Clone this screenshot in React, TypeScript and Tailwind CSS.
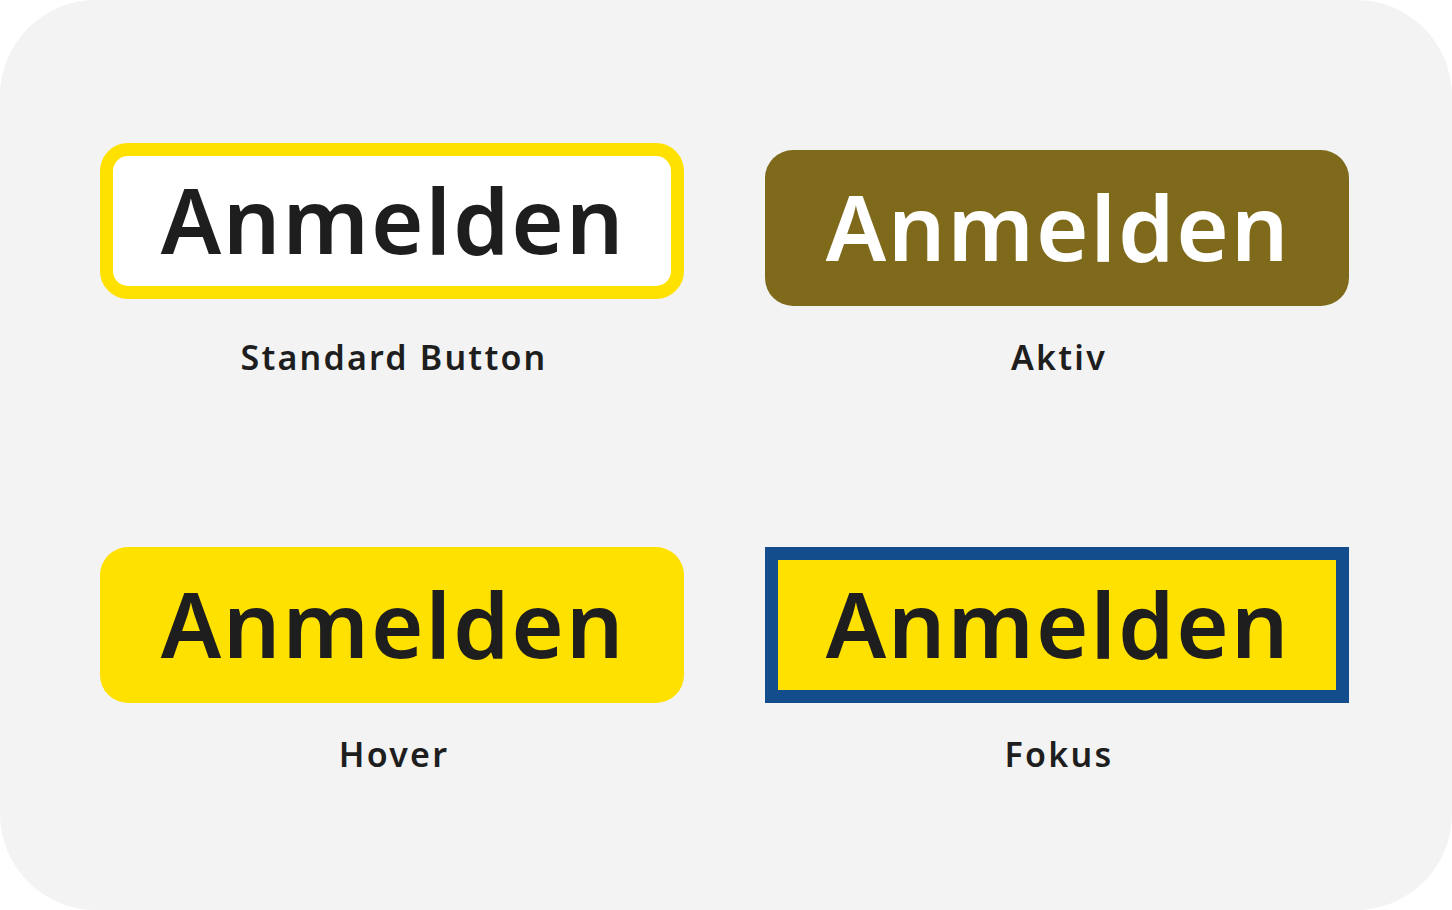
import type { ReactNode } from "react";

type Variant = "standard" | "active" | "hover" | "focus";

const buttonStyles: Record<Variant, string> = {
	standard: "rounded-[28px] border-[13px] border-[#ffe100] bg-white text-[#1e1e1e]",
	active: "translate-y-[7px] rounded-[28px] bg-[#7f6a1c] text-white",
	hover: "rounded-[28px] bg-[#ffe100] text-[#1e1e1e]",
	focus: "border-[13px] border-[#134d8b] bg-[#ffe100] text-[#1e1e1e]",
};

function StateButton({ variant, children }: { variant: Variant; children: ReactNode }) {
	return (
		<div
			className={`flex h-[156px] w-full items-center justify-center pb-[4px] pl-[2px] text-[90px] leading-none font-semibold tracking-[0.022em] ${buttonStyles[variant]}`}
		>
			{children}
		</div>
	);
}

function StateCell({
	variant,
	label,
	labelGap,
}: {
	variant: Variant;
	label: string;
	labelGap: string;
}) {
	return (
		<div className="flex flex-col items-center">
			<StateButton variant={variant}>Anmelden</StateButton>
			<span
				className={`${labelGap} pl-[4px] text-[34px] leading-[40px] font-semibold tracking-[0.065em] text-[#1e1e1e]`}
			>
				{label}
			</span>
		</div>
	);
}

export default function App() {
	return (
		<div
			className="min-h-screen bg-white"
			style={{ fontFamily: '"Noto Sans", "Open Sans", sans-serif' }}
		>
			<div className="h-[910px] w-[1452px] rounded-[96px] bg-[#f3f3f3] pt-[143px] pl-[100px]">
				<div className="grid grid-cols-[584px_584px] gap-x-[81px] gap-y-[170px]">
					<StateCell variant="standard" label="Standard Button" labelGap="mt-[38px]" />
					<StateCell variant="active" label="Aktiv" labelGap="mt-[38px]" />
					<StateCell variant="hover" label="Hover" labelGap="mt-[31px]" />
					<StateCell variant="focus" label="Fokus" labelGap="mt-[31px]" />
				</div>
			</div>
		</div>
	);
}
